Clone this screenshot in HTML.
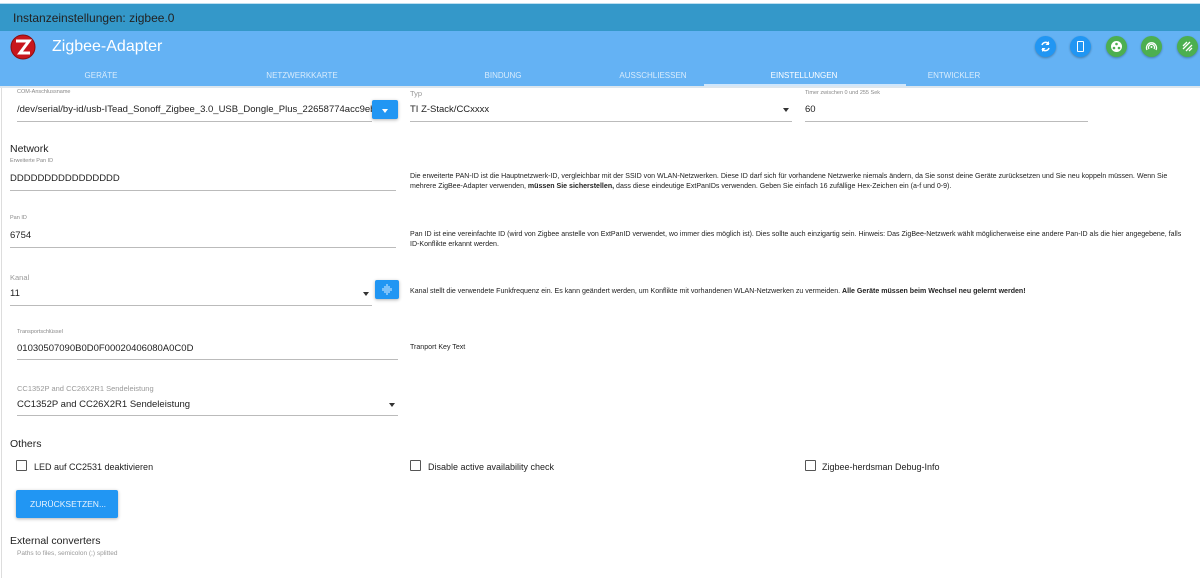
<!DOCTYPE html>
<html><head><meta charset="utf-8"><style>
*{margin:0;padding:0;box-sizing:border-box}
body{width:1200px;height:578px;overflow:hidden;background:#fff;font-family:"Liberation Sans",Arial,sans-serif;position:relative;color:#222}
.a{position:absolute;white-space:nowrap}
.lbl{font-size:5.5px;color:#888}
.lbl2{font-size:7.5px;color:#999}
.val{font-size:9.5px;color:#222}
.ul{position:absolute;height:1px;background:#bbb}
.desc{font-size:7.05px;color:#222;line-height:9.5px}
.h{font-size:10.5px;color:#222}
.tab{position:absolute;top:71px;font-size:8px;color:rgba(255,255,255,.75);transform:translateX(-50%);white-space:nowrap}
.ic{position:absolute;top:36px;width:21px;height:21px;border-radius:50%;box-shadow:0 1px 2px rgba(0,0,0,.3)}
.arr{position:absolute;width:0;height:0;border-left:3.5px solid transparent;border-right:3.5px solid transparent;border-top:4px solid #333}
.cb{position:absolute;width:11px;height:11px;border:1.5px solid #555;border-radius:1px}
.btn{position:absolute;background:#2196f3;box-shadow:0 1px 3px rgba(0,0,0,.3);border-radius:2px}
</style></head><body>
<div class="a" style="left:0;top:0;width:1200px;height:4px;background:#fff;border-bottom:1px solid #bcdff0"></div>
<div class="a" style="left:0;top:4px;width:1200px;height:27px;background:#3498c9"></div>
<div class="a" style="left:13px;top:11px;font-size:12px;color:#222">Instanzeinstellungen: zigbee.0</div>
<div class="a" style="left:0;top:31px;width:1200px;height:56px;background:#64b2f4"></div>
<div class="a" style="left:0;top:86px;width:1200px;height:2px;background:#dce6ee"></div>
<svg class="a" style="left:10px;top:34px" width="26" height="26" viewBox="0 0 26 26"><circle cx="13" cy="13" r="12" fill="#c8161d"/><circle cx="13" cy="13" r="12" fill="none" stroke="#8a0d10" stroke-width="1"/><path d="M6 7 H19 L10 19 H20" fill="none" stroke="#fff" stroke-width="3"/></svg>
<div class="a" style="left:52px;top:38px;font-size:16px;color:#fff">Zigbee-Adapter</div>
<div class="ic" style="left:1035px;background:#2196f3"></div>
<svg class="a" style="left:1039px;top:40px" width="13" height="13" viewBox="0 0 13 13"><path d="M10 4 A4 4 0 0 0 3 5 M3 9 A4 4 0 0 0 10 8" fill="none" stroke="#fff" stroke-width="1.5"/><path d="M10 1 V5 H6.5 Z M3 12 V8 H6.5 Z" fill="#fff"/></svg>
<div class="ic" style="left:1070px;background:#2196f3"></div>
<div class="a" style="left:1077px;top:41px;width:7px;height:11px;border:1.5px solid #fff;border-radius:1px"></div>
<div class="ic" style="left:1106px;background:#4caf50"></div>
<svg class="a" style="left:1110px;top:40px" width="13" height="13" viewBox="0 0 13 13"><circle cx="6.5" cy="6.5" r="5.5" fill="#fff"/><circle cx="6.5" cy="4" r="1.3" fill="#4caf50"/><circle cx="4" cy="8" r="1.3" fill="#4caf50"/><circle cx="9" cy="8" r="1.3" fill="#4caf50"/></svg>
<div class="ic" style="left:1141px;background:#4caf50"></div>
<svg class="a" style="left:1145px;top:40px" width="13" height="13" viewBox="0 0 13 13"><path d="M2 10 A5 5 0 1 1 11 10 M4 9 A3 3 0 1 1 9 9" fill="none" stroke="#fff" stroke-width="1.3"/><circle cx="6.5" cy="7" r="1" fill="#fff"/></svg>
<div class="ic" style="left:1177px;background:#4caf50"></div>
<svg class="a" style="left:1181px;top:40px" width="13" height="13" viewBox="0 0 13 13"><path d="M2 6 L6 2 M2 9 L9 2 M5 11 L11 5 M8 11 L11 8" stroke="#fff" stroke-width="1.3"/></svg>
<div class="tab" style="left:101px">GERÄTE</div>
<div class="tab" style="left:302px">NETZWERKKARTE</div>
<div class="tab" style="left:503px">BINDUNG</div>
<div class="tab" style="left:653px">AUSSCHLIESSEN</div>
<div class="tab" style="left:804px;color:#fff">EINSTELLUNGEN</div>
<div class="tab" style="left:954px">ENTWICKLER</div>
<div class="a" style="left:704px;top:84px;width:202px;height:2px;background:#cfe6fb"></div>
<div class="a" style="left:1px;top:88px;width:1px;height:490px;background:#ddd"></div>

<div class="a lbl" style="left:17px;top:89px">COM-Anschlussname</div>
<div class="a val" style="left:17px;top:104px;width:355px;overflow:hidden">/dev/serial/by-id/usb-ITead_Sonoff_Zigbee_3.0_USB_Dongle_Plus_22658774acc9eb119d81914f1d69</div>
<div class="ul" style="left:17px;top:121px;width:355px"></div>
<div class="btn" style="left:372px;top:100px;width:26px;height:19px"></div>
<div class="arr" style="left:382px;top:109px;border-top-color:#fff"></div>

<div class="a lbl2" style="left:410px;top:89px">Typ</div>
<div class="a val" style="left:410px;top:104px">TI Z-Stack/CCxxxx</div>
<div class="arr" style="left:783px;top:108px"></div>
<div class="ul" style="left:410px;top:121px;width:382px"></div>

<div class="a lbl" style="left:805px;top:90px">Timer zwischen 0 und 255 Sek</div>
<div class="a val" style="left:805px;top:104px">60</div>
<div class="ul" style="left:805px;top:121px;width:283px"></div>

<div class="a h" style="left:10px;top:143px">Network</div>
<div class="a lbl" style="left:10px;top:158px">Erweiterte Pan ID</div>
<div class="a val" style="left:10px;top:173px">DDDDDDDDDDDDDDDD</div>
<div class="ul" style="left:10px;top:190px;width:386px"></div>
<div class="a desc" style="left:410px;top:172px">Die erweiterte PAN-ID ist die Hauptnetzwerk-ID, vergleichbar mit der SSID von WLAN-Netzwerken. Diese ID darf sich für vorhandene Netzwerke niemals ändern, da Sie sonst deine Geräte zurücksetzen und Sie neu koppeln müssen. Wenn Sie<br>mehrere ZigBee-Adapter verwenden, <b>müssen Sie sicherstellen,</b> dass diese eindeutige ExtPanIDs verwenden. Geben Sie einfach 16 zufällige Hex-Zeichen ein (a-f und 0-9).</div>

<div class="a lbl" style="left:10px;top:215px">Pan ID</div>
<div class="a val" style="left:10px;top:230px">6754</div>
<div class="ul" style="left:10px;top:247px;width:386px"></div>
<div class="a desc" style="left:410px;top:230px">Pan ID ist eine vereinfachte ID (wird von Zigbee anstelle von ExtPanID verwendet, wo immer dies möglich ist). Dies sollte auch einzigartig sein. Hinweis: Das ZigBee-Netzwerk wählt möglicherweise eine andere Pan-ID als die hier angegebene, falls<br>ID-Konflikte erkannt werden.</div>

<div class="a lbl2" style="left:10px;top:273px">Kanal</div>
<div class="a val" style="left:10px;top:288px">11</div>
<div class="arr" style="left:363px;top:292px"></div>
<div class="ul" style="left:10px;top:305px;width:362px"></div>
<div class="btn" style="left:375px;top:280px;width:24px;height:19px"></div>
<svg class="a" style="left:382px;top:284px" width="10" height="11" viewBox="0 0 10 11"><path d="M1 4 V7 M3 2 V9 M5 0 V11 M7 2 V9 M9 4 V7" stroke="#d8ecff" stroke-width="1"/></svg>
<div class="a desc" style="left:410px;top:287px">Kanal stellt die verwendete Funkfrequenz ein. Es kann geändert werden, um Konflikte mit vorhandenen WLAN-Netzwerken zu vermeiden. <b>Alle Geräte müssen beim Wechsel neu gelernt werden!</b></div>

<div class="a lbl" style="left:17px;top:329px">Transportschlüssel</div>
<div class="a val" style="left:17px;top:343px">01030507090B0D0F00020406080A0C0D</div>
<div class="ul" style="left:17px;top:359px;width:381px"></div>
<div class="a desc" style="left:410px;top:343px">Tranport Key Text</div>

<div class="a lbl2" style="left:17px;top:384px">CC1352P and CC26X2R1 Sendeleistung</div>
<div class="a val" style="left:17px;top:399px">CC1352P and CC26X2R1 Sendeleistung</div>
<div class="arr" style="left:389px;top:403px"></div>
<div class="ul" style="left:17px;top:415px;width:381px"></div>

<div class="a h" style="left:10px;top:438px">Others</div>
<div class="cb" style="left:16px;top:460px"></div>
<div class="a" style="left:34px;top:462px;font-size:9px">LED auf CC2531 deaktivieren</div>
<div class="cb" style="left:410px;top:460px"></div>
<div class="a" style="left:428px;top:462px;font-size:9px">Disable active availability check</div>
<div class="cb" style="left:805px;top:460px"></div>
<div class="a" style="left:822px;top:462px;font-size:9px">Zigbee-herdsman Debug-Info</div>

<div class="btn" style="left:16px;top:490px;width:102px;height:28px"></div>
<div class="a" style="left:30px;top:499px;font-size:8.5px;color:#e8f3fe">ZURÜCKSETZEN...</div>

<div class="a h" style="left:10px;top:535px">External converters</div>
<div class="a" style="left:17px;top:550px;font-size:6.5px;color:#999">Paths to files, semicolon (;) splitted</div>
</body></html>
